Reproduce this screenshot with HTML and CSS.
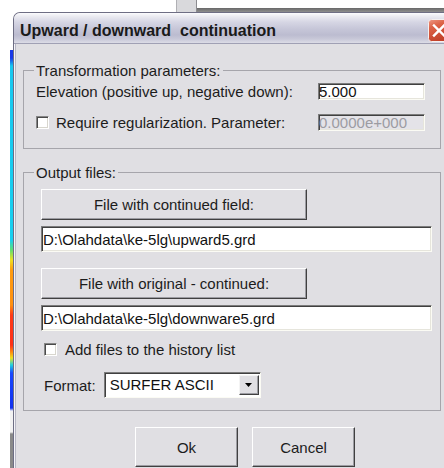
FILE: index.html
```html
<!DOCTYPE html>
<html lang="en">
<head>
<meta charset="utf-8">
<title>Upward / downward continuation</title>
<link rel="stylesheet" href="styles.css">
</head>
<body>
  <!-- bits of the application window lying behind the dialog -->
  <div class="desk-thumb"></div>
  <div class="desk-bar"></div>
  <div class="map-edge"></div>

  <section class="dialog" role="dialog" aria-labelledby="dlg-title">
    <header class="titlebar">
      <h1 class="title" id="dlg-title">Upward / downward  continuation</h1>
      <button class="close" type="button" aria-label="Close">
        <svg width="22" height="23" viewBox="0 0 22 23">
          <defs>
            <linearGradient id="closeFill" x1="0" y1="0" x2="0.4" y2="1">
              <stop offset="0" stop-color="#ee9a86"/>
              <stop offset="0.35" stop-color="#dd6448"/>
              <stop offset="1" stop-color="#c2412a"/>
            </linearGradient>
          </defs>
          <rect x="0.5" y="0.5" width="21" height="22" rx="3" fill="url(#closeFill)" stroke="#f4f0f0"/>
          <path d="M6 6.5 L16 16.5 M16 6.5 L6 16.5" stroke="#fff" stroke-width="2.4" stroke-linecap="square"/>
        </svg>
      </button>
    </header>

    <div class="client">
      <fieldset class="group">
        <legend>Transformation parameters:</legend>
        <div class="group-body params">
          <div class="row">
            <label for="elevation">Elevation (positive up, negative down):</label>
            <input class="field field-num" id="elevation" type="text" value="5.000">
          </div>
          <div class="row">
            <input class="check" id="regularize" type="checkbox">
            <label class="check-label" for="regularize">Require regularization. Parameter:</label>
            <input class="field field-num" type="text" value="0.0000e+000" disabled>
          </div>
        </div>
      </fieldset>

      <fieldset class="group group-output">
        <legend>Output files:</legend>
        <div class="group-body outputs">
          <button class="btn btn-file" type="button">File with continued field:</button>
          <input class="field field-path" type="text" value="D:\Olahdata\ke-5lg\upward5.grd">
          <button class="btn btn-file btn-second" type="button">File with original - continued:</button>
          <input class="field field-path" type="text" value="D:\Olahdata\ke-5lg\downware5.grd">
          <div class="row history">
            <input class="check" id="history" type="checkbox">
            <label class="check-label" for="history">Add files to the history list</label>
          </div>
          <div class="row format">
            <span>Format:</span>
            <div class="combo">
              <span class="combo-value">SURFER ASCII</span>
              <span class="combo-btn">
                <svg width="7" height="4" viewBox="0 0 7 4"><polygon points="0,0 7,0 3.5,4" fill="#000"/></svg>
              </span>
            </div>
          </div>
        </div>
      </fieldset>

      <div class="actions">
        <button class="btn btn-action" type="button">Ok</button>
        <button class="btn btn-action" type="button">Cancel</button>
      </div>
    </div>
  </section>
</body>
</html>
```

FILE: styles.css
```css
* {
  box-sizing: border-box;
}

body {
  margin: 0;
  width: 444px;
  height: 468px;
  overflow: hidden;
  position: relative;
  background: #ffffff;
  font-family: "Liberation Sans", Arial, sans-serif;
  font-size: 15px;
  color: #1c1c1c;
}

/* ---- application window behind the dialog ---- */
.desk-thumb {
  position: absolute;
  left: 176px;
  top: 0;
  width: 21px;
  height: 12px;
  background: #d9d9dc;
  border-left: 1px solid #b0b0b4;
  border-right: 1px solid #8c8c90;
}

.desk-bar {
  position: absolute;
  left: 197px;
  right: 0;
  top: 8px;
  height: 4px;
  background: linear-gradient(#686868, #8e8e8e);
}

/* sliver of the colour map peeking out left of the dialog */
.map-edge {
  position: absolute;
  left: 10px;
  top: 50px;
  width: 3px;
  height: 418px;
  background: linear-gradient(to bottom,
    #1838e8 0, #1838e8 8px, #18c8f0 16px, #18d0f0 190px,
    #60e070 200px, #f0e020 210px, #ff9c10 220px, #ff9010 255px,
    #ff3a18 265px, #ff3018 295px, #ff8a10 302px, #f0e020 308px,
    #20d0e0 315px, #1848ff 323px, #1030f0 358px, #f2f2f2 361px,
    #f2f2f2 382px, #8a8a8a 384px, #8a8a8a 418px);
}

/* ---- dialog window ---- */
.dialog {
  position: absolute;
  left: 13px;
  top: 12px;
  width: 452px;
  border: 1px solid #6e6e84;
  border-bottom: none;
  border-radius: 7px 7px 0 0;
  overflow: hidden;
  background: #e0dfe3;
}

.titlebar {
  display: flex;
  align-items: flex-start;
  height: 31px;
  padding: 9px 0 0 6px;
  border-bottom: 1px solid #a0a0b4;
  background: linear-gradient(to bottom,
    #fcfcfe 0, #ececf2 3px, #d6d6e4 9px, #c6c6d8 16px,
    #bcbcd0 22px, #c8c8d8 26px, #dcdce6 30px);
}

.title {
  margin: 0;
  font-size: 16px;
  font-weight: bold;
  line-height: 18px;
  white-space: pre;
  color: #1a1a1a;
}

.close {
  margin: -3px 14px 0 auto;
  padding: 0;
  border: none;
  background: none;
  width: 22px;
  height: 23px;
  display: block;
}

.close svg {
  display: block;
}

.client {
  padding: 18px 0 1px 9px;
  box-shadow: inset 1px 0 0 #f4f4f8, inset 2px 0 0 #b6b6c4;
}

/* ---- group boxes ---- */
.group {
  margin: 0;
  padding: 0;
  width: 418px;
  min-width: 0;
  border: 1px solid #a6a5ab;
}

.group legend {
  margin-left: 10px;
  padding: 0 2px;
  line-height: 17px;
}

.group-output {
  margin-top: 15px;
}

.group-body {
  display: flex;
  flex-direction: column;
}

.params {
  padding: 4px 15px 17px 12px;
  gap: 14px;
}

.outputs {
  padding: 8px 7px 12px 17px;
  align-items: flex-start;
}

.row {
  display: flex;
  align-items: center;
  height: 17px;
}

/* ---- controls ---- */
.field {
  display: block;
  margin: 0;
  border: 1px solid;
  border-color: #7c7c7c #fbfbf4 #fbfbf4 #7c7c7c;
  box-shadow: inset 1px 1px 0 #404040, inset -1px -1px 0 #e6e5dc;
  background: #ffffff;
  font: inherit;
  color: #111111;
  outline: none;
}

.field-num {
  margin-left: auto;
  width: 107px;
  height: 17px;
  padding: 0;
}

.field:disabled {
  background: #e4e3e8;
  color: #9c9ca2;
  -webkit-text-fill-color: #9c9ca2;
  opacity: 1;
}

.field-path {
  width: 391px;
  height: 26px;
  padding: 0 0 0 1px;
  margin-top: 6px;
}

.check {
  appearance: none;
  -webkit-appearance: none;
  margin: 0;
  width: 13px;
  height: 13px;
  flex: none;
  border: 1px solid;
  border-color: #868686 #ffffff #ffffff #868686;
  box-shadow: inset 1px 1px 0 #4a4a4a, inset -1px -1px 0 #d8d6ce;
  background: #ffffff;
}

.check-label {
  margin-left: 7px;
}

.btn {
  margin: 0;
  padding: 0;
  font: inherit;
  color: #1c1c1c;
  background: #e0dfe3;
  border: 1px solid;
  border-color: #ffffff #404040 #404040 #ffffff;
  box-shadow: inset -1px -1px 0 #9c9ca2;
}

.btn-file {
  width: 266px;
  height: 31px;
}

.btn-second {
  margin-top: 16px;
}

.history {
  margin-top: 10px;
  margin-left: 3px;
}

.history .check-label {
  margin-left: 8px;
}

.format {
  margin-top: 14px;
  margin-left: 3px;
  height: 26px;
  gap: 8px;
}

.combo {
  display: flex;
  width: 157px;
  height: 26px;
  padding: 2px 1px 2px 2px;
  border: 1px solid;
  border-color: #7c7c7c #fbfbf4 #fbfbf4 #7c7c7c;
  box-shadow: inset 1px 1px 0 #404040;
  background: #ffffff;
}

.combo-value {
  flex: 1;
  padding-left: 3px;
  line-height: 20px;
  color: #111111;
}

.combo-btn {
  display: flex;
  align-items: center;
  justify-content: center;
  width: 20px;
  background: #e0dfe3;
  border: 1px solid;
  border-color: #f4f4f4 #404040 #404040 #f4f4f4;
  box-shadow: inset -1px -1px 0 #9c9ca2;
}

.combo-btn svg {
  display: block;
}

/* ---- dialog buttons ---- */
.actions {
  display: flex;
  gap: 14px;
  margin: 16px 0 0 112px;
}

.btn-action {
  width: 103px;
  height: 40px;
}
```
